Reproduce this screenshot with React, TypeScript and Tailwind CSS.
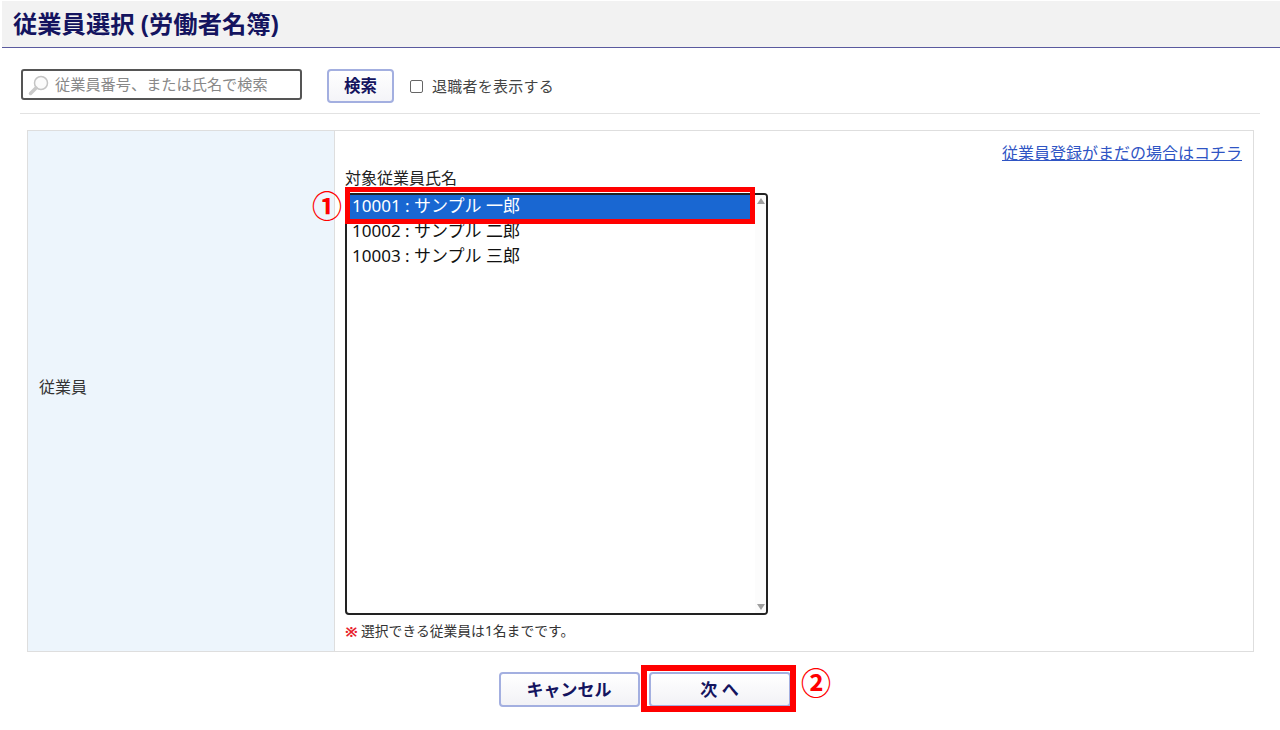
const employees = ['10001 : サンプル 一郎', '10002 : サンプル 二郎', '10003 : サンプル 三郎'];

function SearchIcon() {
  return (
    <svg width="22" height="22" viewBox="0 0 22 22" fill="none" className="shrink-0">
      <circle cx="13" cy="9" r="6.5" stroke="#c4c4c4" strokeWidth="1.5" fill="#fbfbfb" />
      <path d="M8 14 L2.5 19.5" stroke="#c9c9c9" strokeWidth="3.5" strokeLinecap="round" />
    </svg>
  );
}

function ScrollArrow({ down }: { down?: boolean }) {
  return (
    <svg width="8" height="6" viewBox="0 0 8 6">
      <polygon points={down ? '0,0 8,0 4,6' : '4,0 8,6 0,6'} fill="#a0a0a0" />
    </svg>
  );
}

export default function App() {
  return (
    <div className="relative w-[1280px] h-[730px] overflow-hidden bg-white text-[#222] font-['Noto_Sans','Noto_Sans_CJK_JP',sans-serif]">
      {/* Title bar */}
      <div className="ml-[2px] mt-[1px] h-[47px] flex items-center pl-[11px] bg-[#f2f2f2] border-b border-[#5a5a9e]">
        <h1 className="text-[24.3px] font-bold text-[#14145f] leading-none whitespace-pre">従業員選択 (労働者名簿)</h1>
      </div>

      {/* Search row */}
      <div className="mx-[20px] mt-[21px] h-[45px] flex items-start border-b border-[#e2e2e2]">
        <div className="ml-[1px] w-[281px] h-[31px] flex items-center gap-[5px] pl-[5px] bg-white border-2 border-[#555] rounded-[3px]">
          <SearchIcon />
          <span className="text-[15.2px] text-[#888] leading-none whitespace-nowrap">従業員番号、または氏名で検索</span>
        </div>
        <button className="ml-[25px] w-[67px] h-[34px] bg-gradient-to-b from-white to-[#f4f4f8] border-2 border-[#a3afe0] rounded-[4px] text-[16.5px] font-bold text-[#14145f]">
          検索
        </button>
        <div className="ml-[16px] h-[34px] flex items-center">
          <span className="w-[13px] h-[13px] border border-[#666] rounded-[2px] bg-white" />
          <span className="ml-[9px] text-[15px] text-[#444] leading-none tracking-[0.25px]">退職者を表示する</span>
        </div>
      </div>

      {/* Form table */}
      <div className="ml-[27px] mt-[16px] w-[1227px] h-[522px] flex border border-[#dedede]">
        <div className="w-[307px] flex items-center pl-[11px] pb-[9px] bg-[#edf5fc] border-r border-[#dedede] text-[16px] text-[#333]">
          従業員
        </div>
        <div className="flex-1 flex flex-col pl-[10px] pr-[11px] pt-[11px]">
          <a className="self-end text-[16px] leading-[22px] text-[#2f55c4] underline">
            従業員登録がまだの場合はコチラ
          </a>
          <div className="mt-[4px] text-[16px] leading-[20px] text-[#222]">対象従業員氏名</div>
          <div className="mt-[5px] relative w-[423px] h-[422px] border-2 border-[#222] rounded-[4px] bg-white text-[17px] overflow-hidden">
            {employees.map((name, i) => (
              <div
                key={name}
                className={
                  i === 0
                    ? 'h-[25px] mr-[15px] pl-[5px] leading-[21px] whitespace-pre bg-[#1967d2] text-white'
                    : 'h-[25px] pl-[5px] leading-[21px] whitespace-pre text-[#111]'
                }
              >
                {name}
              </div>
            ))}
            {/* Scroll track */}
            <div className="absolute right-0 top-0 bottom-0 w-[11px] bg-[#fcfcfc] flex flex-col items-center justify-between py-[3px]">
              <ScrollArrow />
              <ScrollArrow down />
            </div>
          </div>
          <p className="mt-[7px] flex items-center text-[13.8px] leading-[18px] text-[#333] whitespace-nowrap">
            <span className="w-[16px] text-[#e8212b] font-bold text-[15px]">※</span>
            選択できる従業員は1名までです。
          </p>
        </div>
      </div>

      {/* Footer buttons */}
      <div className="mt-[20px] flex justify-center gap-[9px] pl-[9px]">
        <button className="w-[141px] h-[35px] bg-gradient-to-b from-white to-[#f2f2f6] border-2 border-[#a3afe0] rounded-[4px] text-[17px] font-bold text-[#14145f]">
          キャンセル
        </button>
        <button className="w-[142px] h-[35px] bg-gradient-to-b from-white to-[#f2f2f6] border-2 border-[#a3afe0] rounded-[4px] text-[17px] font-bold text-[#14145f]">
          次 へ
        </button>
      </div>

      {/* Annotations over the screen */}
      <div className="absolute left-[345px] top-[187px] w-[410px] h-[37px] border-[5px] border-[#ff0000]" />
      <div className="absolute left-[641px] top-[665px] w-[155px] h-[47px] border-[6px] border-[#ff0000]" />
      <span className="absolute left-[312px] top-[188px] text-[30px] leading-[36px] font-bold text-[#ff0000]">①</span>
      <span className="absolute left-[801px] top-[665px] text-[30px] leading-[36px] font-bold text-[#ff0000]">②</span>
    </div>
  );
}
